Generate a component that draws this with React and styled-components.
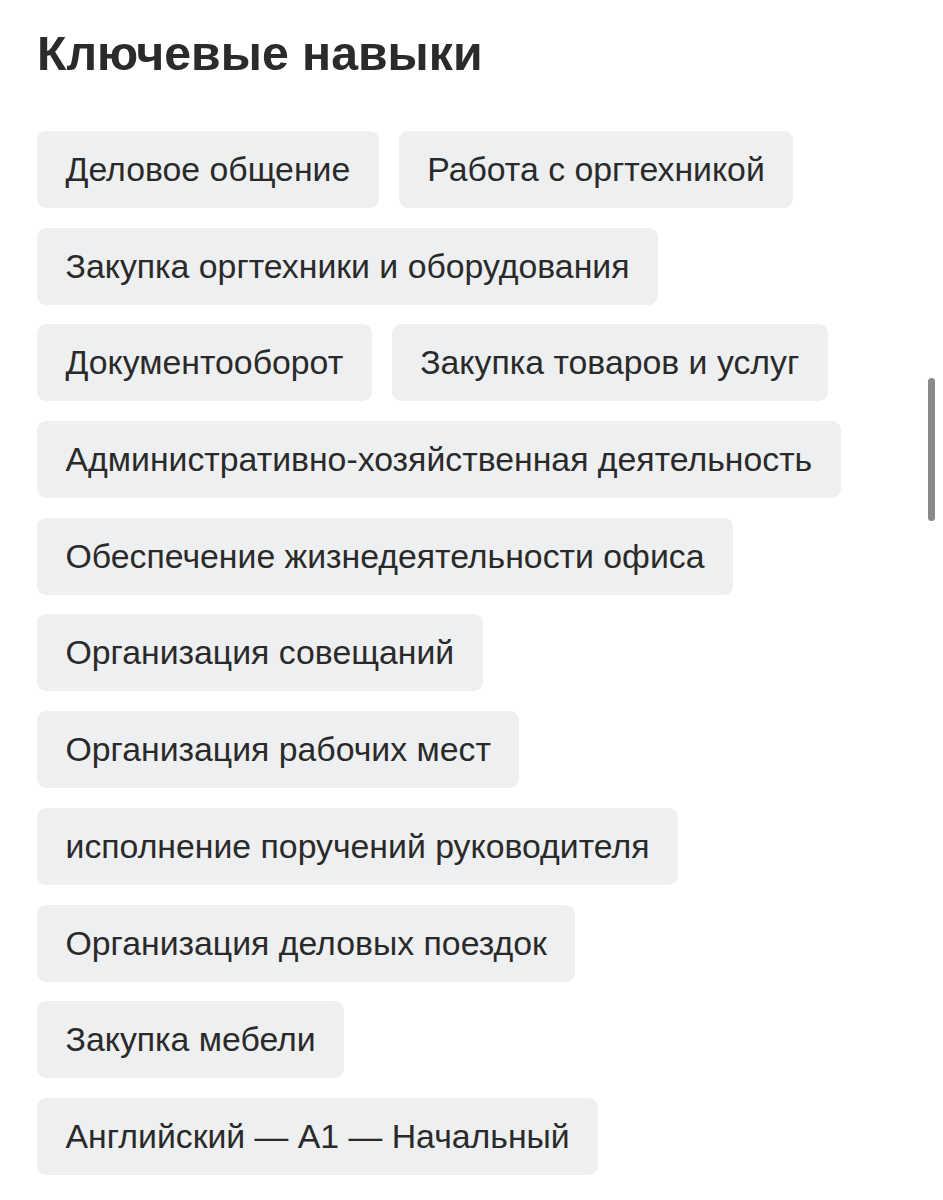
import styled, { createGlobalStyle } from "styled-components";

const GlobalStyle = createGlobalStyle`
  html, body {
    margin: 0;
    padding: 0;
    background: #ffffff;
  }
  body {
    font-family: "Liberation Sans", Arial, sans-serif;
    color: #2a2a2a;
  }
`;

const Page = styled.div`
  position: relative;
  width: 943px;
  height: 1200px;
  overflow: hidden;
  box-sizing: border-box;
  padding: 20px 76px 0 37px;
`;

const Title = styled.h2`
  margin: 0 0 45px 0;
  font-size: 48.2px;
  line-height: 66px;
  font-weight: 700;
  color: #2b2b2b;
`;

const Tags = styled.div`
  display: flex;
  flex-wrap: wrap;
  column-gap: 20px;
  row-gap: 19.7px;
`;

const Tag = styled.div`
  height: 77px;
  display: flex;
  align-items: center;
  padding: 0 28.5px;
  box-sizing: border-box;
  background: #eeeff1;
  border-radius: 9px;
  font-size: 33.8px;
  color: #2a2a2a;
  white-space: nowrap;
`;

const Scrollbar = styled.div`
  position: absolute;
  top: 378px;
  right: 8px;
  width: 7px;
  height: 143px;
  border-radius: 4px;
  background: #8a8a8a;
`;

const skills = [
  "Деловое общение",
  "Работа с оргтехникой",
  "Закупка оргтехники и оборудования",
  "Документооборот",
  "Закупка товаров и услуг",
  "Административно-хозяйственная деятельность",
  "Обеспечение жизнедеятельности офиса",
  "Организация совещаний",
  "Организация рабочих мест",
  "исполнение поручений руководителя",
  "Организация деловых поездок",
  "Закупка мебели",
  "Английский — A1 — Начальный",
];

const App = () => {
  return (
    <>
      <GlobalStyle />
      <Page>
        <Title>Ключевые навыки</Title>
        <Tags>
          {skills.map((s) => (
            <Tag key={s}>{s}</Tag>
          ))}
        </Tags>
        <Scrollbar />
      </Page>
    </>
  );
};

export default App;
